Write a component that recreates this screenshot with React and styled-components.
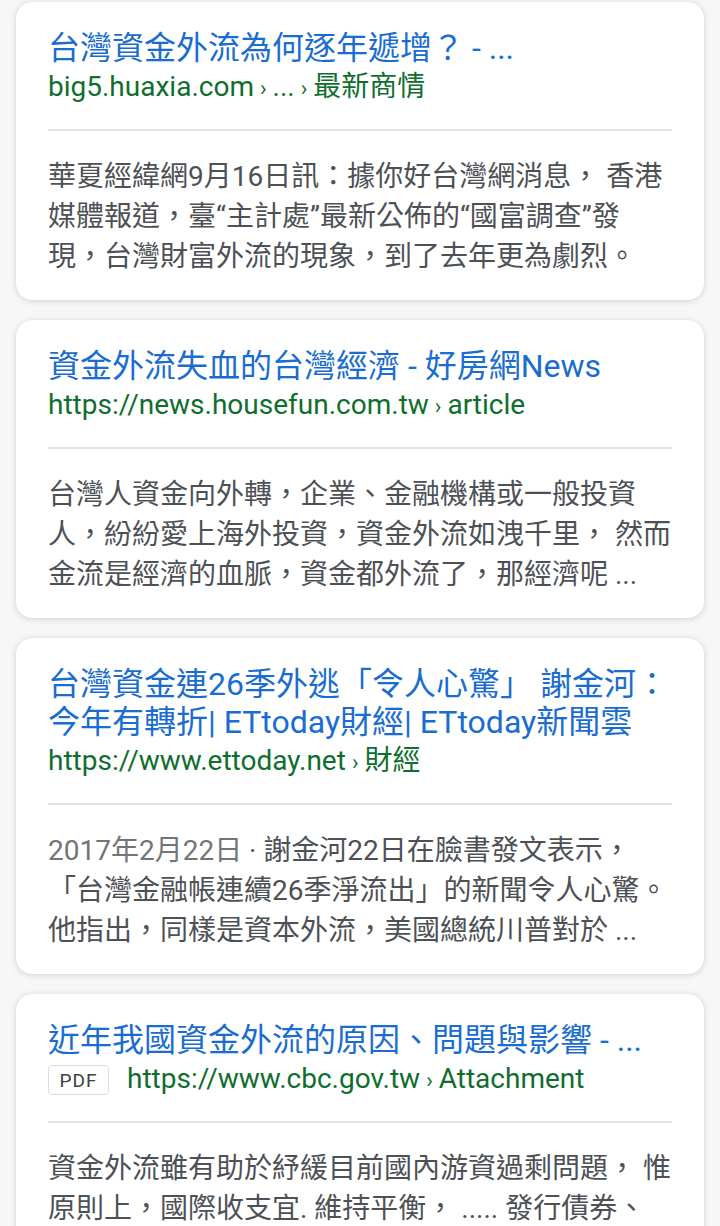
import styled, { createGlobalStyle } from "styled-components";

const GlobalStyle = createGlobalStyle`
    body {
        margin: 0;
        background: #f7f7f7;
        font-family: Roboto, "Noto Sans CJK TC", sans-serif;
    }
`;

// 結果列表
const ResultList = styled.div`
    display: flex;
    flex-direction: column;
    gap: 20px;
    padding: 2px 16px 20px;
`;

// 卡片
const Card = styled.div`
    background: #fff;
    border-radius: 16px;
    box-shadow: 0 1px 6px rgba(32, 33, 36, 0.16), 0 0 1px rgba(32, 33, 36, 0.12);
    padding: 27px 32px 23px;
`;

const Title = styled.div`
    color: #1a6dd0;
    font-size: 32px;
    line-height: 38px;
`;

const UrlRow = styled.div`
    display: flex;
    align-items: center;
    gap: 18px;
    height: 40px;
    margin-top: 1px;
`;

const Url = styled.div`
    color: #0f6e2e;
    font-size: 28px;
    line-height: 40px;
    white-space: nowrap;
`;

const Sep = styled.span`
    font-size: 22px;
    margin: 0 6px;
`;

const PdfBadge = styled.span`
    display: inline-flex;
    align-items: center;
    justify-content: center;
    width: 61px;
    height: 30px;
    box-sizing: border-box;
    border: 1px solid #dadce0;
    border-radius: 4px;
    font-size: 19px;
    letter-spacing: 1px;
    color: #3c4043;
`;

const Divider = styled.hr`
    border: none;
    height: 2px;
    background: #e3e3e3;
    margin: 21px 0 26px;
`;

const Snippet = styled.div`
    color: #4d5156;
    font-size: 28px;
    line-height: 40px;
`;

const DateText = styled.span`
    color: #70757a;
`;

const results = [
    {
        title: "台灣資金外流為何逐年遞增？ - ...",
        url: ["big5.huaxia.com", "...", "最新商情"],
        lines: [
            "華夏經緯網9月16日訊：據你好台灣網消息， 香港",
            "媒體報道，臺“主計處”最新公佈的“國富調查”發",
            "現，台灣財富外流的現象，到了去年更為劇烈。",
        ],
    },
    {
        title: "資金外流失血的台灣經濟 - 好房網News",
        url: ["https://news.housefun.com.tw", "article"],
        lines: [
            "台灣人資金向外轉，企業、金融機構或一般投資",
            "人，紛紛愛上海外投資，資金外流如洩千里， 然而",
            "金流是經濟的血脈，資金都外流了，那經濟呢 ...",
        ],
    },
    {
        title: "台灣資金連26季外逃「令人心驚」 謝金河：今年有轉折| ETtoday財經| ETtoday新聞雲",
        url: ["https://www.ettoday.net", "財經"],
        date: "2017年2月22日",
        lines: [
            " · 謝金河22日在臉書發文表示，",
            "「台灣金融帳連續26季淨流出」的新聞令人心驚。",
            "他指出，同樣是資本外流，美國總統川普對於 ...",
        ],
    },
    {
        title: "近年我國資金外流的原因、問題與影響 - ...",
        pdf: true,
        url: ["https://www.cbc.gov.tw", "Attachment"],
        lines: [
            "資金外流雖有助於紓緩目前國內游資過剩問題， 惟",
            "原則上，國際收支宜. 維持平衡， ..... 發行債券、",
        ],
    },
];

function Breadcrumb({ parts }) {
    return (
        <Url>
            {parts.map((p, i) => (
                <span key={i}>
                    {i > 0 && <Sep>›</Sep>}
                    {p}
                </span>
            ))}
        </Url>
    );
}

function ResultCard({ item }) {
    return (
        <Card>
            <Title>{item.title}</Title>
            <UrlRow>
                {item.pdf && <PdfBadge>PDF</PdfBadge>}
                <Breadcrumb parts={item.url} />
            </UrlRow>
            <Divider />
            <Snippet>
                {item.lines.map((line, i) => (
                    <div key={i}>
                        {i === 0 && item.date && <DateText>{item.date}</DateText>}
                        {line}
                    </div>
                ))}
            </Snippet>
        </Card>
    );
}

export default function App() {
    return (
        <>
            <GlobalStyle />
            <ResultList>
                {results.map((r, i) => (
                    <ResultCard key={i} item={r} />
                ))}
            </ResultList>
        </>
    );
}
